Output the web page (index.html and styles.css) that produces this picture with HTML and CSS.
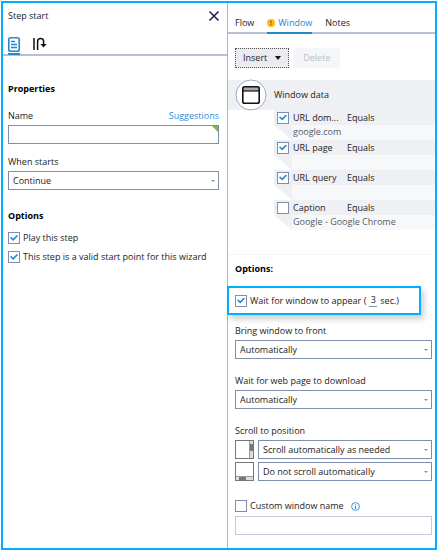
FILE: index.html
```html
<!DOCTYPE html>
<html lang="en">
<head>
    <meta charset="UTF-8">
    <meta name="viewport" content="width=device-width, initial-scale=1.0">
    <title>Step start</title>
    <link rel="stylesheet" href="styles.css">
</head>
<body>
    <main class="editor">
        <section class="step-panel">
            <header class="step-header">
                <h1>Step start</h1>
                <button type="button" class="close-button" aria-label="Close">
                    <svg width="12" height="12" viewBox="0 0 12 12" fill="none" stroke="#241f5c" stroke-width="1.6"><path d="M1.5 1.5l9 9M10.5 1.5l-9 9"/></svg>
                </button>
            </header>
            <nav class="step-tabs">
                <a href="#" class="active" aria-label="Properties">
                    <svg width="12" height="15" viewBox="0 0 12 15" fill="none" stroke="#2288cc"><rect x="0.8" y="0.8" width="10.4" height="13.4" rx="1.8" stroke-width="1.6"/><path d="M3 4.5h4M3 7.5h6M3 10.5h6" stroke-width="1.3"/></svg>
                </a>
                <a href="#" aria-label="Actions">
                    <svg width="14" height="14" viewBox="0 0 14 14" fill="none" stroke="#111" stroke-width="1.5"><path d="M1 1v12M4.6 13V4.6a3 3 0 0 1 6 0V8"/><path d="M7.4 7h6.2l-3.1 3.6z" fill="#111" stroke="none"/></svg>
                </a>
            </nav>
            <div class="step-body">
                <h2>Properties</h2>
                <div class="field">
                    <div class="field-head">
                        <label for="name">Name</label>
                        <a href="#">Suggestions</a>
                    </div>
                    <div class="name-box">
                        <input type="text" id="name">
                    </div>
                </div>
                <div class="field">
                    <label for="starts">When starts</label>
                    <div class="select">
                        <select id="starts"><option>Continue</option></select>
                    </div>
                </div>
                <h2>Options</h2>
                <label class="check"><input type="checkbox" checked>Play this step</label>
                <label class="check"><input type="checkbox" checked>This step is a valid start point for this wizard</label>
            </div>
        </section>

        <section class="window-panel">
            <nav class="window-tabs">
                <a href="#">Flow</a>
                <a href="#" class="active">
                    <svg width="8" height="8" viewBox="0 0 8 8"><circle cx="4" cy="4" r="4" fill="#fdb813"/><path d="M4 1.8v2.6M4 5.2v1" stroke="#5c4300" stroke-width="0.9"/></svg>
                    Window
                </a>
                <a href="#">Notes</a>
            </nav>
            <div class="toolbar">
                <button type="button" class="insert-button">
                    Insert
                    <svg width="6" height="4" viewBox="0 0 6 4"><path d="M0 0h6L3 4z" fill="#111"/></svg>
                </button>
                <button type="button" class="delete-button" disabled>Delete</button>
            </div>

            <div class="window-data">
                <div class="data-head">
                    <svg width="32" height="32" viewBox="0 0 32 32" fill="none"><circle cx="16" cy="16" r="15" fill="#fff" stroke="#9daac4"/><path d="M7.5 8h17v4h-17z" fill="#aaa"/><rect x="7.8" y="7.8" width="16.4" height="16.4" rx="1.8" stroke="#111" stroke-width="1.6"/><path d="M8 12h16" stroke="#111" stroke-width="1.2"/></svg>
                    <h2>Window data</h2>
                </div>
                <div class="rule">
                    <label class="rule-head"><input type="checkbox" checked><span>URL dom...</span><span>Equals</span></label>
                    <div class="rule-value">google.com</div>
                </div>
                <div class="rule">
                    <label class="rule-head"><input type="checkbox" checked><span>URL page</span><span>Equals</span></label>
                    <div class="rule-value"></div>
                </div>
                <div class="rule">
                    <label class="rule-head"><input type="checkbox" checked><span>URL query</span><span>Equals</span></label>
                    <div class="rule-value"></div>
                </div>
                <div class="rule">
                    <label class="rule-head"><input type="checkbox"><span>Caption</span><span>Equals</span></label>
                    <div class="rule-value">Google - Google Chrome</div>
                </div>
            </div>

            <div class="window-options">
                <h2>Options:</h2>
                <div class="wait-box">
                    <label class="check"><input type="checkbox" checked>Wait for window to appear (</label>
                    <input type="text" class="seconds" value="3" aria-label="Seconds">
                    <span>sec.)</span>
                </div>
                <div class="field">
                    <label for="front">Bring window to front</label>
                    <div class="select">
                        <select id="front"><option>Automatically</option></select>
                    </div>
                </div>
                <div class="field">
                    <label for="download">Wait for web page to download</label>
                    <div class="select">
                        <select id="download"><option>Automatically</option></select>
                    </div>
                </div>
                <div class="field">
                    <label for="vertical">Scroll to position</label>
                    <div class="scroll-row">
                        <svg width="19" height="19" viewBox="0 0 19 19"><rect x="0.5" y="0.5" width="18" height="18" fill="#fff" stroke="#777"/><rect x="14" y="1" width="4" height="17" fill="#ddd"/><path d="M14.5 1v17" stroke="#999"/><rect x="15" y="4" width="3" height="7" fill="#777"/></svg>
                        <div class="select">
                            <select id="vertical"><option>Scroll automatically as needed</option></select>
                        </div>
                    </div>
                    <div class="scroll-row">
                        <svg width="19" height="19" viewBox="0 0 19 19"><rect x="0.5" y="0.5" width="18" height="18" fill="#fff" stroke="#777"/><rect x="1" y="14" width="17" height="4" fill="#ddd"/><path d="M1 14.5h17" stroke="#999"/><rect x="4" y="15" width="7" height="3" fill="#777"/></svg>
                        <div class="select">
                            <select aria-label="Horizontal scroll"><option>Do not scroll automatically</option></select>
                        </div>
                    </div>
                </div>
                <div class="custom-name">
                    <label class="check">
                        <input type="checkbox">Custom window name
                        <svg width="9" height="9" viewBox="0 0 9 9" fill="none" stroke="#2a9be0"><circle cx="4.5" cy="4.5" r="3.9"/><path d="M4.5 4v3M4.5 2.2v1"/></svg>
                    </label>
                    <input type="text" aria-label="Custom window name" disabled>
                </div>
            </div>
        </section>
    </main>
</body>
</html>
```
FILE: styles.css
```css
* {
    box-sizing: border-box;
}

body {
    margin: 1px;
    background-color: #fff;
    color: #222;
    font-family: "Open Sans", "Noto Sans", sans-serif;
    font-size: 9px;
    line-height: 14px;
}

h1, h2 {
    margin: 0;
    font-size: 9px;
    font-weight: normal;
}

a {
    color: inherit;
    text-decoration: none;
}

svg {
    display: block;
    flex: none;
}

button, input, select {
    margin: 0;
    color: inherit;
    font: inherit;
}

.editor {
    display: grid;
    grid-template-columns: 225fr 207fr;
    min-height: calc(100vh - 2px);
    border: 2px solid #00b0ff;
}

/* left panel */
.step-panel {
    border-right: 1px solid #a9b4cb;
}

.step-header {
    display: flex;
    justify-content: space-between;
    align-items: center;
    height: 26px;
    padding: 0 7px 0 5px;
}

.close-button {
    padding: 0;
    border: none;
    background: none;
}

.step-tabs {
    display: flex;
    gap: 13px;
    height: 27px;
    padding: 8px 5px 0;
    border-bottom: 2px solid #b7bfd3;
}

.step-tabs .active {
    height: 18px;
    border-bottom: 2px solid #2288cc;
}

.step-body {
    padding: 26px 8px 0 5px;
}

.step-body h2, .window-options h2 {
    color: #000;
    font-weight: bold;
}

.step-body h2 {
    margin-bottom: 13px;
}

.field {
    display: flex;
    flex-direction: column;
    gap: 2px;
}

.step-body .field {
    margin-bottom: 11px;
}

.step-body .field + h2 {
    margin: 19px 0 8px;
}

.field-head {
    display: flex;
    justify-content: space-between;
}

.field-head a {
    color: #2a8fd8;
}

.name-box {
    position: relative;
}

/* green corner of the name box */
.name-box::after {
    content: "";
    position: absolute;
    top: 1px;
    right: 1px;
    border-top: 6px solid #7cb93e;
    border-left: 6px solid transparent;
}

input[type="text"] {
    display: block;
    width: 100%;
    height: 19px;
    padding: 0 4px;
    border: 1px solid #7f8eac;
    background-color: #fff;
}

.select {
    position: relative;
    flex: 1;
}

.select::after {
    content: "";
    position: absolute;
    top: 9px;
    right: 4px;
    border: 2px solid transparent;
    border-top-color: #8390ac;
    border-bottom: 0;
    pointer-events: none;
}

select {
    display: block;
    appearance: none;
    width: 100%;
    height: 19px;
    padding: 0 4px;
    border: 1px solid #7f8eac;
    border-radius: 0;
    background-color: #fff;
}

input[type="checkbox"] {
    display: grid;
    place-items: center;
    flex: none;
    appearance: none;
    width: 12px;
    height: 12px;
    border: 1px solid #7f8eac;
    background-color: #fff;
}

input[type="checkbox"]:checked::after {
    content: "";
    width: 8px;
    height: 6px;
    background-color: #168bd4;
    clip-path: polygon(0 45%, 14% 30%, 38% 62%, 86% 0, 100% 15%, 40% 100%);
}

.check {
    display: flex;
    align-items: center;
    gap: 3px;
}

.step-body .check {
    margin-bottom: 5px;
}

/* right panel */
.window-tabs {
    display: flex;
    gap: 13px;
    height: 31px;
    padding: 13px 7px 0;
    border-bottom: 2px solid #b7bfd3;
}

.window-tabs a {
    height: 18px;
}

.window-tabs .active {
    display: flex;
    align-items: center;
    gap: 3px;
    padding-bottom: 2px;
    border-bottom: 2px solid #2288cc;
    color: #2288cc;
}

.toolbar {
    display: flex;
    gap: 4px;
    padding: 14px 7px 12px;
}

.toolbar button {
    display: flex;
    align-items: center;
    height: 20px;
    border: none;
    background-color: #f5f6f8;
}

.toolbar .insert-button {
    gap: 8px;
    padding: 0 7px;
    border: 1px dotted #555;
    background-color: #e9ebf0;
}

.toolbar .delete-button {
    padding: 0 10px;
    color: #b9c0cc;
}

.data-head {
    display: flex;
    align-items: center;
    gap: 7px;
    height: 30px;
    padding-left: 7px;
    background-color: #eff0f3;
}

.rule {
    margin-left: 46px;
}

.rule-head {
    display: grid;
    grid-template-columns: 12px 50px 1fr;
    column-gap: 4px;
    align-items: center;
    height: 15px;
    padding-left: 3px;
    background-color: #eff0f3;
    white-space: nowrap;
}

.rule-value {
    height: 15px;
    padding-left: 19px;
    background: linear-gradient(to right, #eff0f3 18px, #f7f8fa 18px);
    clip-path: polygon(0 0, 100% 0, 100% 100%, 18px 100%);
    color: #555b66;
}

.window-options {
    margin-top: 24px;
    padding: 7px 3px 0 7px;
    border-top: 1px solid #f3f4f6;
}

.wait-box {
    display: flex;
    align-items: center;
    gap: 3px;
    height: 29px;
    margin: 10px 11px 9px -8px;
    padding-left: 6px;
    border: 2px solid #00b0ff;
    box-shadow: 3px 4px 6px rgba(0, 0, 0, 0.2);
}

.wait-box .seconds {
    width: 8px;
    height: 13px;
    padding: 0;
    border-width: 0 0 1px;
    text-align: center;
}

.window-options .field {
    margin-bottom: 15px;
}

.scroll-row {
    display: flex;
    gap: 4px;
}

.scroll-row + .scroll-row {
    margin-top: 1px;
}

.custom-name {
    display: flex;
    flex-direction: column;
    gap: 3px;
    margin-top: 18px;
}

.custom-name svg {
    margin-left: 4px;
}

.custom-name input[type="text"] {
    border-color: #c3cad9;
}
```
